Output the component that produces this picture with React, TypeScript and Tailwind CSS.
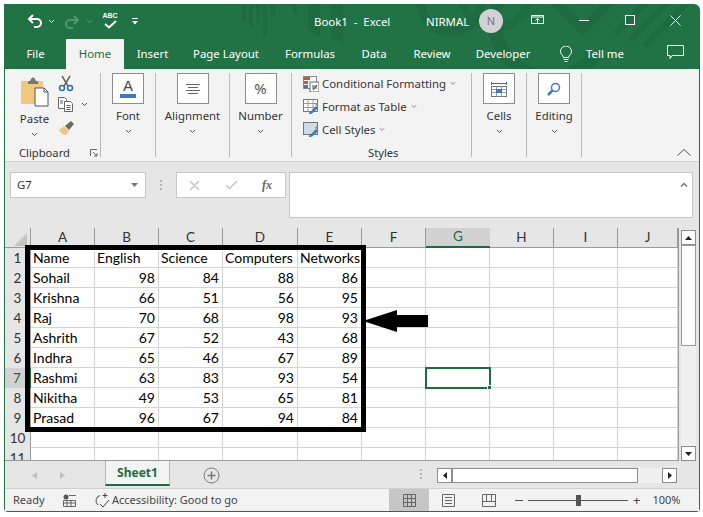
import React from "react";

const ui = { fontFamily: '"Noto Sans", "Open Sans", sans-serif' };
const cellFont = { fontFamily: 'Lato, "Liberation Sans", sans-serif' };

const Chev = ({ c = "#555", w = 7 }: { c?: string; w?: number }) => (
  <svg width={w} height={5} viewBox="0 0 7 5" className="shrink-0">
    <path d="M1 1l2.500 2.500L6 1" fill="none" stroke={c} strokeWidth="1" />
  </svg>
);

function TitleDecor() {
  const d = "#1e6b41";
  return (
    <svg className="absolute left-0 top-0 pointer-events-none" width="695" height="65" viewBox="0 0 695 65">
      <g fill={d}>
        <rect x="237" y="0" width="4" height="17" />
        <rect x="244" y="0" width="4" height="24" />
        <rect x="251" y="0" width="4" height="19" />
        <rect x="258" y="0" width="4" height="33" />
        <rect x="266" y="0" width="4" height="12" />
        <path d="M285 0h7v14z" />
        <path d="M303 0h12v33l-12-8z" />
        <path d="M326 0h12v38l-12-4z" />
      </g>
      <g fill="none" stroke={d}>
        <circle cx="446" cy="-2" r="30" strokeWidth="9" />
        <circle cx="490" cy="-10" r="34" strokeWidth="8" opacity="0.8" />
        <path d="M500 -15 A 52 52 0 0 0 590 50" strokeWidth="13" />
        <path d="M548 -5l30 30 34-34" strokeWidth="10" />
        <path d="M625 36l40-40M640 42l44-46M610 30l34-34" strokeWidth="6" />
      </g>
    </svg>
  );
}

function Undo({ dim }: { dim?: boolean }) {
  return (
    <svg width="16" height="16" viewBox="0 0 16 16" className={dim ? "opacity-40" : ""}>
      <path d="M6 2L2 6l4 4M2.500 6H10a4 4 0 0 1 0 8H7" fill="none" stroke={dim ? "#9fd0b4" : "#fff"} strokeWidth="2" />
    </svg>
  );
}

function TitleBar() {
  return (
    <div className="h-[35px] flex items-center text-white text-[11.4px] relative pr-[18px]">
      <div className="ml-[22px] mt-[-1px]"><Undo /></div>
      <div className="ml-[5px]"><Chev c="#d5e6dc" /></div>
      <div className="ml-[9px] scale-x-[-1]"><Undo dim /></div>
      <div className="ml-[6px]"><Chev c="#5e9c7b" /></div>
      <div className="ml-[9px] flex flex-col items-center mt-[-3px] w-[16px]">
        <span className="text-[7px] font-bold leading-[8px]" style={{ fontFamily: '"Liberation Sans"' }}>ABC</span>
        <svg width="13" height="9" viewBox="0 0 13 9">
          <path d="M1 4l4 3.500L12 1" fill="none" stroke="#fff" strokeWidth="2" />
        </svg>
      </div>
      <svg width="6" height="7" viewBox="0 0 6 7" className="ml-[14px] mt-[-1px]">
        <path d="M0 0h6v1H0zM0 3h6L3 6.500z" fill="#fff" />
      </svg>
      <span className="ml-[176px] whitespace-nowrap mt-[1px]">Book1&nbsp; -&nbsp; Excel</span>
      <span className="ml-auto w-[44px] mt-[1px]">NIRMAL</span>
      <div className="ml-[9px] w-[24px] h-[24px] rounded-full bg-[#d2d2d2] flex items-center justify-center text-[#7b6f86] text-[11px] mt-[-1px]">N</div>
      <svg width="14" height="10" viewBox="0 0 14 10" className="ml-[28px] mt-[-3px]">
        <path d="M.5.500h12v8H.5zM0 2h13M6.500 8V4M4.500 5.500l2-2 2 2" fill="none" stroke="#fff" />
      </svg>
      <div className="ml-[34px] w-[10px] h-[1px] bg-white mt-[-3px]" />
      <div className="ml-[36px] w-[10px] h-[10px] border border-white mt-[-3px]" />
      <svg width="11" height="11" viewBox="0 0 11 11" className="ml-[35px] mt-[-3px]">
        <path d="M.5.500l10 10M10.500.500l-10 10" stroke="#fff" />
      </svg>
    </div>
  );
}

function Tabs() {
  const tab = "flex items-center justify-center h-full text-white";
  return (
    <div className="h-[30px] flex items-center text-[11.4px] relative pr-[15px]">
      <div className={`${tab} w-[61px]`}>File</div>
      <div className="w-[58px] h-full bg-[#f3f3f3] text-[#1e6b41] flex items-center justify-center">Home</div>
      <div className={`${tab} w-[57px]`}>Insert</div>
      <div className={`${tab} w-[90px]`}>Page Layout</div>
      <div className={`${tab} w-[78px]`}>Formulas</div>
      <div className={`${tab} w-[50px]`}>Data</div>
      <div className={`${tab} w-[66px]`}>Review</div>
      <div className={`${tab} w-[76px]`}>Developer</div>
      <svg width="14" height="17" viewBox="0 0 14 17" className="ml-[18px]">
        <path d="M4.500 11.500C4 9 1.500 8.500 1.500 5.500a5.500 5.500 0 0 1 11 0c0 3-2.500 3.500-3 6zM4.500 13.500h5M5.500 15.500h3" fill="none" stroke="#fff" />
      </svg>
      <span className="ml-[13px] text-white">Tell me</span>
      <svg width="17" height="15" viewBox="0 0 17 15" className="ml-auto mb-[3px]">
        <path d="M.5.500h16v10H5l-2 3v-3H.5z" fill="none" stroke="#fff" />
      </svg>
    </div>
  );
}

const Sep = () => <div className="w-[1px] h-[84px] bg-[#b9b9b9] self-start mt-[4px] shrink-0" />;

function BoxGroup({ label, w, children }: { label: string; w: number; children: React.ReactNode }) {
  return (
    <>
      <div className="flex flex-col items-center pt-[4px] shrink-0" style={{ width: w }}>
        <div className="w-[32px] h-[31px] bg-white border border-[#8d8d8d] flex items-center justify-center">
          {children}
        </div>
        <div className="text-[11.4px] text-[#333] mt-[3px] leading-[17px] whitespace-nowrap">{label}</div>
        <div className="mt-[5px]"><Chev /></div>
      </div>
      <Sep />
    </>
  );
}

function CondIcon() {
  return (
    <svg width="16" height="16" viewBox="0 0 16 16" className="shrink-0">
      <rect x=".5" y=".5" width="13" height="12" fill="#fff" stroke="#888" />
      <rect x="1" y="1" width="6" height="3" fill="#d35230" />
      <rect x="1" y="5" width="4" height="3" fill="#d35230" />
      <rect x="1" y="9" width="4" height="3" fill="#4472c4" />
      <rect x="7" y="6" width="9" height="10" fill="#fff" stroke="#666" />
      <path d="M9 10h5M9 12h5M10 14l4-5" stroke="#444" fill="none" />
    </svg>
  );
}
function TableIcon({ cell }: { cell?: boolean }) {
  return (
    <svg width="16" height="16" viewBox="0 0 16 16" className="shrink-0">
      <rect x=".5" y=".5" width="14" height="12" fill={cell ? "#cfdbe9" : "#fff"} stroke="#777" />
      {!cell && <path d="M.5 4.500h14M.5 8.500h14M5 .5v12M10 .5v12" stroke="#999" />}
      <path d="M6 15c0-3 3-3 4-5l3-3 2 2-3 3c-2 1-2 3-6 3z" fill="#3f79bd" />
      <path d="M12 6l2-2 1 1-2 2z" fill="#888" />
    </svg>
  );
}

function StyleRow({ icon, label }: { icon: React.ReactNode; label: string }) {
  return (
    <div className="h-[23px] flex items-center text-[11.4px] text-[#333] whitespace-nowrap">
      {icon}
      <span className="ml-[3px]">{label}</span>
      <span className="ml-[4px]"><Chev c="#777" w={6} /></span>
    </div>
  );
}

function Ribbon() {
  return (
    <div className="h-[93px] bg-[#f3f3f3] border-b border-[#d2d2d2] flex relative">
      <div className="w-[95px] shrink-0 relative pt-[8px]">
        <div className="flex">
          <div className="w-[59px] flex flex-col items-center">
            <svg width="29" height="30" viewBox="0 0 29 30" className="ml-[-1px]">
              <path d="M1 4h22v23H1z" fill="#efc77d" />
              <path d="M8 4h2l1-2c1-2 3-2 4 0l1 2h2v3H8z" fill="#777" />
              <path d="M15 11h9l4 4v14H15z" fill="#fff" stroke="#555" />
              <path d="M24 11v4h4" fill="none" stroke="#555" />
            </svg>
            <div className="text-[11.4px] text-[#333] leading-[17px] mt-[3px]">Paste</div>
            <div className="mt-[5px]"><Chev /></div>
          </div>
          <div className="flex flex-col items-start ml-[-6px] mt-[-2px]">
            <svg width="16" height="17" viewBox="0 0 16 17">
              <path d="M4 1l6 10M12 1L6 11" stroke="#666" strokeWidth="1.500" fill="none" />
              <circle cx="4" cy="13" r="2.500" fill="none" stroke="#2f6fb5" strokeWidth="1.500" />
              <circle cx="12" cy="13" r="2.500" fill="none" stroke="#2f6fb5" strokeWidth="1.500" />
            </svg>
            <div className="flex items-center mt-[5px]">
              <svg width="16" height="15" viewBox="0 0 16 15">
                <path d="M.5.500h6l2 2v9H.5z" fill="#fff" stroke="#666" />
                <path d="M6.500 4.500h6l2 2v8h-8z" fill="#fff" stroke="#666" />
                <path d="M8.500 8.500h4M8.500 10.500h4M8.500 12.500h4M2 4h3M2 6h3" stroke="#2f6fb5" />
              </svg>
              <span className="ml-[7px]"><Chev /></span>
            </div>
            <svg width="17" height="15" viewBox="0 0 17 15" className="mt-[9px]">
              <path d="M1 9l5-4 5 5-3 4c-3 0-5-2-7-5z" fill="#efc77d" />
              <path d="M7 5l6-5 3 3-5 6z" fill="#6a6a6a" />
            </svg>
          </div>
        </div>
        <div className="absolute left-[14px] top-[76px] text-[11.2px] text-[#333] leading-[16px]">Clipboard</div>
        <svg width="8" height="8" viewBox="0 0 8 8" className="absolute left-[85px] top-[80px]">
          <path d="M.5 7V.5H7M3 3l4 4M7 4v3H4" stroke="#666" fill="none" />
        </svg>
      </div>
      <Sep />
      <BoxGroup label="Font" w={54}>
        <div className="flex flex-col items-center">
          <span className="text-[15px] leading-[14px] text-[#444]" style={{ fontFamily: '"Liberation Sans"' }}>A</span>
          <div className="w-[16px] h-[4px] bg-[#3f79bd] mt-[1px]" />
        </div>
      </BoxGroup>
      <BoxGroup label="Alignment" w={73}>
        <svg width="14" height="10" viewBox="0 0 14 10">
          <path d="M0 .5h14M2 3.500h10M0 6.500h14M2 9.500h10" stroke="#666" />
        </svg>
      </BoxGroup>
      <BoxGroup label="Number" w={61}>
        <span className="text-[15px] text-[#555]">%</span>
      </BoxGroup>
      <div className="w-[179px] shrink-0 pl-[11px] pt-[3px] relative">
        <StyleRow icon={<CondIcon />} label="Conditional Formatting" />
        <StyleRow icon={<TableIcon />} label="Format as Table" />
        <StyleRow icon={<TableIcon cell />} label="Cell Styles" />
        <div className="absolute left-[76px] top-[76px] text-[11.2px] text-[#333] leading-[16px]">Styles</div>
      </div>
      <Sep />
      <BoxGroup label="Cells" w={54}>
        <svg width="16" height="16" viewBox="0 0 16 16">
          <path d="M.5 1v3M15.500 1v3M1 2.500h14" stroke="#2f6fb5" fill="none" />
          <rect x=".5" y="5.500" width="15" height="10" fill="#fff" stroke="#777" />
          <path d="M.5 8.500h15M.5 11.500h15M5.500 5.500v10M10.500 5.500v10" stroke="#999" />
          <rect x="5" y="8" width="6" height="4" fill="#3f79bd" />
        </svg>
      </BoxGroup>
      <BoxGroup label="Editing" w={54}>
        <svg width="14" height="14" viewBox="0 0 14 14">
          <circle cx="8.500" cy="5.500" r="4" fill="none" stroke="#3f79bd" strokeWidth="1.500" />
          <path d="M5.500 8.500L1 13" stroke="#3f79bd" strokeWidth="2.500" />
        </svg>
      </BoxGroup>
      <svg width="14" height="7" viewBox="0 0 14 7" className="absolute right-[8px] top-[80px]">
        <path d="M.5 6.500l6.500-6 6.500 6" fill="none" stroke="#555" />
      </svg>
    </div>
  );
}

function FormulaBar() {
  return (
    <div className="h-[66px] bg-[#e6e6e6] pt-[10px] pl-[5px] flex items-start">
      <div className="w-[136px] h-[26px] bg-white border border-[#c6c6c6] flex items-center pl-[6px] pr-[6px] text-[11.4px] text-[#333]">
        <span className="flex-1">G7</span>
        <svg width="8" height="5" viewBox="0 0 8 5"><path d="M0 0h7L3.500 4z" fill="#777" /></svg>
      </div>
      <div className="w-[30px] h-[26px] flex flex-col items-center justify-center gap-[2px]">
        <div className="w-[2px] h-[2px] bg-[#b5b5b5]" />
        <div className="w-[2px] h-[2px] bg-[#b5b5b5]" />
        <div className="w-[2px] h-[2px] bg-[#b5b5b5]" />
      </div>
      <div className="w-[110px] h-[26px] bg-white border border-[#c6c6c6] flex items-center">
        <svg width="11" height="11" viewBox="0 0 11 11" className="ml-[12px]">
          <path d="M1 1l9 9M10 1l-9 9" stroke="#c6c6c6" strokeWidth="1.500" />
        </svg>
        <svg width="13" height="10" viewBox="0 0 13 10" className="ml-[25px]">
          <path d="M1 5l3.500 3.500L12 1" fill="none" stroke="#c6c6c6" strokeWidth="1.500" />
        </svg>
        <span className="ml-[24px] text-[12px] italic text-[#666] font-bold" style={{ fontFamily: '"Liberation Serif"' }}>fx</span>
      </div>
      <div className="ml-[3px] w-[404px] h-[46px] bg-white border border-[#c6c6c6] flex justify-end pr-[4px] pt-[9px]">
        <svg width="8" height="5" viewBox="0 0 8 5"><path d="M1 4.500L4 1.500l3 3" fill="none" stroke="#777" strokeWidth="1.500" /></svg>
      </div>
    </div>
  );
}

const cols = ["A", "B", "C", "D", "E", "F", "G", "H", "I", "J"];
const data: (string | number)[][] = [
  ["Name", "English", "Science", "Computers", "Networks"],
  ["Sohail", 98, 84, 88, 86],
  ["Krishna", 66, 51, 56, 95],
  ["Raj", 70, 68, 98, 93],
  ["Ashrith", 67, 52, 43, 68],
  ["Indhra", 65, 46, 67, 89],
  ["Rashmi", 63, 83, 93, 54],
  ["Nikitha", 49, 53, 65, 81],
  ["Prasad", 96, 67, 94, 84],
];
const gridCols = "grid grid-cols-[26px_64px_64px_64px_75px_64px_64px_64px_64px_64px_60px] grid-rows-[20px]";

function Sheet() {
  const rows = Array.from({ length: 11 }, (_, i) => i);
  return (
    <div className="w-[674px] h-[233px] overflow-hidden relative shrink-0 border-b border-r border-[#9a9a9a] leading-none" style={cellFont}>
      <div className={`${gridCols} w-[674px] h-[20px]`}>
        <div className="bg-[#e6e6e6] border-b border-[#9a9a9a] border-r relative">
          <svg width="13" height="13" viewBox="0 0 13 13" className="absolute right-[3px] bottom-[1px]">
            <path d="M13 0v13H0z" fill="#c4c4c4" />
          </svg>
        </div>
        {cols.map((c) => (
          <div
            key={c}
            className={
              c === "G"
                ? "bg-[#d2d2d2] border-b-2 border-[#1e6b41] text-[#1e6b41] text-[13.5px] flex items-center justify-center"
                : "bg-[#e6e6e6] border-b border-r border-[#9a9a9a] text-[13.5px] text-[#333] flex items-center justify-center"
            }
          >
            {c}
          </div>
        ))}
      </div>
      {rows.map((r) => (
        <div key={r} className={`${gridCols} w-[674px] h-[20px]`}>
          <div
            className={
              r === 6
                ? "bg-[#d2d2d2] border-r-2 border-[#1e6b41] text-[13.5px] text-[#1e6b41] flex items-center justify-center pt-[1px]"
                : "bg-[#e6e6e6] border-r border-[#9a9a9a] text-[13.5px] text-[#333] flex items-center justify-center pt-[1px]"
            }
          >
            {r + 1}
          </div>
          {cols.map((c, i) => {
            const v = data[r]?.[i];
            return (
              <div
                key={c}
                className={`bg-white border-r border-b border-[#d4d4d4] text-[14px] text-black flex items-center whitespace-nowrap overflow-hidden pl-[2px] pr-[3px] ${
                  typeof v === "number" ? "justify-end" : "justify-start"
                }`}
              >
                {v}
              </div>
            );
          })}
        </div>
      ))}
      {/* selected cell G7 */}
      <div className="absolute left-[420px] top-[139px] w-[66px] h-[22px] border-2 border-[#1e6b41]">
        <div className="absolute right-[-3px] bottom-[-3px] w-[5px] h-[5px] bg-[#1e6b41] border border-white" />
      </div>
      {/* annotation */}
      <div className="absolute left-[20px] top-[17px] w-[341px] h-[187px] border-[5px] border-black" />
      <svg width="66" height="22" viewBox="0 0 66 22" className="absolute left-[358px] top-[82px]">
        <path d="M0 11L34 0v5h31v12H34v5z" fill="#000" />
      </svg>
    </div>
  );
}

function VScroll() {
  const btn = "w-[15px] h-[15px] bg-white border border-[#8d8d8d] flex items-center justify-center shrink-0";
  return (
    <div className="ml-[2px] w-[15px] h-[233px] pt-[2px] flex flex-col bg-[#e6e6e6]">
      <div className={btn}>
        <svg width="7" height="4" viewBox="0 0 7 4"><path d="M0 4h7L3.500 0z" fill="#222" /></svg>
      </div>
      <div className="flex-1 bg-[#f0f0f0] flex flex-col">
        <div className="h-[101px] bg-white border border-[#9a9a9a]" />
      </div>
      <div className={btn}>
        <svg width="7" height="4" viewBox="0 0 7 4"><path d="M0 0h7L3.500 4z" fill="#222" /></svg>
      </div>
    </div>
  );
}

function SheetTabs() {
  const btn = "w-[15px] h-[15px] bg-white border border-[#8d8d8d] flex items-center justify-center shrink-0";
  return (
    <div className="h-[28px] bg-[#e6e6e6] flex items-start border-b border-[#d0d0d0]">
      <svg width="5" height="7" viewBox="0 0 5 7" className="ml-[27px] mt-[11px]"><path d="M5 0v7L0 3.500z" fill="#c0c0c0" /></svg>
      <svg width="5" height="7" viewBox="0 0 5 7" className="ml-[23px] mt-[11px]"><path d="M0 0v7l5-3.500z" fill="#c0c0c0" /></svg>
      <div className="ml-[40px] w-[65px] h-[25px] bg-[#f3f3f3] border-b-2 border-x border-x-[#b9b9b9] border-b-[#1e6b41] text-[#1e6b41] font-bold text-[12px] flex items-center justify-center">
        Sheet1
      </div>
      <svg width="17" height="17" viewBox="0 0 17 17" className="ml-[33px] mt-[6px]">
        <circle cx="8.500" cy="8.500" r="7.500" fill="none" stroke="#777" />
        <path d="M8.500 4.500v8M4.500 8.500h8" stroke="#777" strokeWidth="1.500" />
      </svg>
      <div className="ml-[200px] mt-[8px] flex flex-col gap-[2px]">
        <div className="w-[2px] h-[2px] bg-[#b5b5b5]" />
        <div className="w-[2px] h-[2px] bg-[#b5b5b5]" />
        <div className="w-[2px] h-[2px] bg-[#b5b5b5]" />
      </div>
      <div className="ml-[15px] mt-[7px] flex w-[240px] h-[15px] bg-[#f0f0f0]">
        <div className={btn}>
          <svg width="4" height="7" viewBox="0 0 4 7"><path d="M4 0v7L0 3.500z" fill="#222" /></svg>
        </div>
        <div className="w-[186px] bg-white border border-[#8d8d8d]" />
        <div className="flex-1" />
        <div className={btn}>
          <svg width="4" height="7" viewBox="0 0 4 7"><path d="M0 0v7l4-3.500z" fill="#222" /></svg>
        </div>
      </div>
    </div>
  );
}

function StatusBar() {
  return (
    <div className="h-[22px] bg-[#f3f3f3] flex items-center text-[11px] text-[#444]">
      <span className="ml-[8px] w-[50px]">Ready</span>
      <svg width="13" height="13" viewBox="0 0 13 13" className="shrink-0">
        <circle cx="3" cy="3" r="2.500" fill="#555" />
        <path d="M6 1.500h7M.5 6.500h12v6H.5zM.5 9h12M4 6.500v6M8 6.500v6" stroke="#666" fill="none" />
      </svg>
      <svg width="17" height="17" viewBox="0 0 17 17" className="ml-[18px] shrink-0">
        <path d="M6 3.500A5.500 5.500 0 0 0 4 13M11 1v5M8.500 3.500h5M6 12l3 3 6-7" fill="none" stroke="#444" />
      </svg>
      <span className="ml-[1px] w-[128px] whitespace-nowrap">Accessibility: Good to go</span>
      <div className="ml-[149px] w-[40px] h-[22px] bg-[#c6c6c6] flex items-center justify-center shrink-0">
        <svg width="13" height="13" viewBox="0 0 13 13">
          <path d="M.5.500h12v12H.5zM.5 4.500h12M.5 8.500h12M4.500.5v12M8.500.5v12" stroke="#666" fill="none" />
        </svg>
      </div>
      <svg width="13" height="13" viewBox="0 0 13 13" className="ml-[13px] shrink-0">
        <path d="M.5.500h12v12H.5zM3 3.500h7M3 6.500h7M3 9.500h7" stroke="#666" fill="none" />
      </svg>
      <svg width="14" height="13" viewBox="0 0 14 13" className="ml-[27px] shrink-0">
        <path d="M.5.500h13v12H.5zM.5 7.500h13M4.500 .5v7M9.500 .5v7" stroke="#666" fill="none" />
      </svg>
      <div className="ml-[19px] w-[8px] h-[1px] bg-[#555] shrink-0" />
      <div className="ml-[5px] w-[100px] h-[1px] bg-[#555] relative shrink-0">
        <div className="absolute left-[48px] top-[-5px] w-[5px] h-[11px] bg-[#555]" />
      </div>
      <span className="ml-[5px] text-[13px] leading-none">+</span>
      <span className="ml-[12px]">100%</span>
    </div>
  );
}

export default function App() {
  return (
    <div className="w-[703px] h-[517px] bg-white pt-[4px] pl-[4px]" style={ui}>
      <div className="w-[696px] h-[508px] bg-[#217346] rounded-tr-[6px] rounded-bl-[4px] rounded-br-[4px] px-[1px] pb-[1px] overflow-hidden flex flex-col">
        <div className="relative">
          <TitleDecor />
          <TitleBar />
          <Tabs />
        </div>
        <Ribbon />
        <FormulaBar />
        <div className="flex bg-[#e6e6e6]">
          <Sheet />
          <VScroll />
        </div>
        <SheetTabs />
        <StatusBar />
      </div>
    </div>
  );
}
